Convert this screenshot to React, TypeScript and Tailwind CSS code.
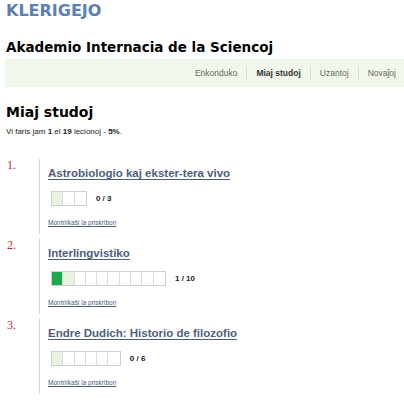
const courses = [
  { n: 1, title: "Astrobiologio kaj ekster-tera vivo", done: 0, total: 3 },
  { n: 2, title: "Interlingvistiko", done: 1, total: 10 },
  { n: 3, title: "Endre Dudich: Historio de filozofio", done: 0, total: 6 },
];

const navItems = ["Enkonduko", "Miaj studoj", "Uzantoj", "Novaĵoj"];

function Progress({ done, total }: { done: number; total: number }) {
  return (
    <div className="flex items-center">
      <div className="flex shrink-0 border border-[#cfcfcf]">
        {Array.from({ length: total }).map((_, i) => (
          <span
            key={i}
            className={`h-[13px] w-[11.3px] shrink-0 border-r border-[#dcdcdc] last:border-r-0 ${
              i < done ? "bg-[#1aa84a]" : i === done ? "bg-[#e8f4e0]" : "bg-white"
            }`}
          />
        ))}
      </div>
      <span className="ml-[9px] font-['Liberation_Sans',sans-serif] text-[8px] font-bold text-[#222]">
        {done} / {total}
      </span>
    </div>
  );
}

export default function App() {
  return (
    <div className="h-[400px] w-[404px] overflow-hidden bg-white font-['DejaVu_Sans',sans-serif]">
      <div className="px-[6px] pt-[1px] text-[16px] font-bold leading-[20px] text-[#5b80b4]">KLERIGEJO</div>
      <h1 className="mt-[17px] px-[6px] text-[13.5px] font-bold leading-[18px] text-black">
        Akademio Internacia de la Sciencoj
      </h1>
      <nav className="ml-[5px] mt-[3px] flex h-[28px] items-center justify-end bg-[#f1f8eb] pr-[8px] font-['Liberation_Sans',sans-serif] text-[8.5px] text-[#666]">
        {navItems.map((item, i) => (
          <div key={item} className="flex items-center">
            {i > 0 && <span className="mx-[9px] h-[12px] w-px bg-[#d8d8d8]" />}
            <span className={item === "Miaj studoj" ? "font-bold text-[#333]" : ""}>{item}</span>
          </div>
        ))}
      </nav>
      <h2 className="mt-[16px] px-[6px] text-[14px] font-bold leading-[18px] text-black">Miaj studoj</h2>
      <p className="mt-[6px] px-[6px] font-['Liberation_Sans',sans-serif] text-[8px] leading-[10px] text-[#222]">
        Vi faris jam <b>1</b> el <b>19</b> lecionoj - <b>5%</b>.
      </p>
      <div className="mt-[22px] flex flex-col gap-[5px]">
        {courses.map((c) => (
          <div key={c.n} className="flex">
            <div className="w-[39px] pl-[7px] font-['Liberation_Serif',serif] text-[12px] leading-[12px] text-[#c0282d]">
              {c.n}.
            </div>
            <div className="h-[75px] border-l border-[#d8d8d8] pl-[8px] pt-[7px]">
              <a className="block font-['Liberation_Sans',sans-serif] text-[11.5px] font-bold leading-[14px] text-[#4d5e7e] underline underline-offset-2">
                {c.title}
              </a>
              <div className="mt-[11px] pl-[3px]">
                <Progress done={c.done} total={c.total} />
              </div>
              <a className="mt-[13px] block font-['Liberation_Sans',sans-serif] text-[6.5px] leading-[8px] text-[#4d5e7e] underline">
                Montri/kaŝi la priskribon
              </a>
            </div>
          </div>
        ))}
      </div>
    </div>
  );
}
